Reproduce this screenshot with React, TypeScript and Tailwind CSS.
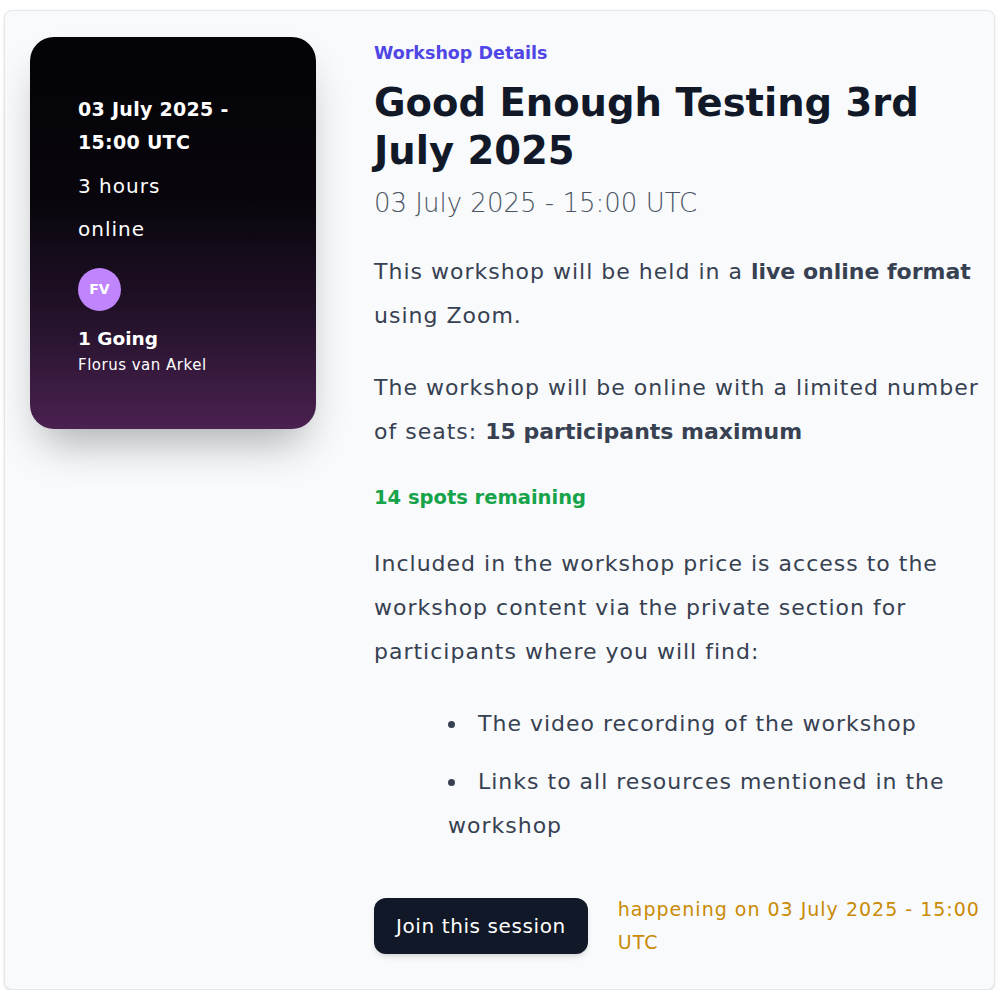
import React from 'react';

const includes = [
  'The video recording of the workshop',
  'Links to all resources mentioned in the workshop',
];

function SessionCard() {
  return (
    <div className="w-[286px] shrink-0 rounded-3xl bg-[linear-gradient(180deg,#040307_0%,#08060c_42%,#24122b_72%,#4a2150_100%)] pt-14 px-12 pb-[52px] text-white shadow-[0_24px_44px_-12px_rgba(0,0,0,0.32)]">
      <p className="text-[19px] font-bold leading-[33px] tracking-[0.3px]">03 July 2025 - 15:00 UTC</p>
      <p className="mt-[6px] text-[20px] leading-[43px] tracking-[1px]">3 hours</p>
      <p className="text-[20px] leading-[43px] tracking-[1px]">online</p>

      <div className="mt-[17px] flex h-[43px] w-[43px] items-center justify-center rounded-full bg-[#c084fc] text-[14px] font-bold">
        FV
      </div>
      <p className="mt-[14px] text-[18.5px] font-bold leading-[28px]">1 Going</p>
      <p className="text-[15px] leading-[24px] tracking-[0.5px]">Florus van Arkel</p>
    </div>
  );
}

export default function App() {
  return (
    <div className="bg-white pt-[10px] pl-[4px] font-['DejaVu_Sans',sans-serif]">
      <div className="flex h-[980px] w-[991px] gap-[58px] rounded-lg border border-gray-200 bg-slate-50 pt-[26px] pl-[25px] pr-[8px] shadow-sm">
        <div>
          <SessionCard />
        </div>

        {/* Details */}
        <div className="flex-1 pt-[2px]">
          <p className="text-[17.5px] font-bold leading-[28px] text-[#4f46e5]">Workshop Details</p>
          <h1 className="mt-3 text-[38.5px] font-bold leading-[48px] text-[#111827]">
            Good Enough Testing 3rd July 2025
          </h1>
          <p className="mt-[10px] text-[26px] font-light leading-[36px] text-[#4b5563]">
            03 July 2025 - 15:00 UTC
          </p>

          <div className="mt-[29px] space-y-7 text-[22px] leading-[44px] tracking-[1px] text-[#374151]">
            <p>
              This workshop will be held in a{' '}
              <strong className="font-bold tracking-normal">live online format</strong> using Zoom.
            </p>
            <p>
              The workshop will be online with a limited number of seats:{' '}
              <strong className="font-bold tracking-normal">15 participants maximum</strong>
            </p>
            <p className="text-[19.5px] font-bold leading-[32px] tracking-normal text-[#16a34a]">14 spots remaining</p>
            <p>
              Included in the workshop price is access to the workshop content via the private section for
              participants where you will find:
            </p>
            <ul className="list-inside list-disc space-y-[14px] pl-[74px]">
              {includes.map((item) => (
                <li key={item}>{item}</li>
              ))}
            </ul>
          </div>

          <div className="mt-[45px] flex items-center gap-[30px]">
            <button className="shrink-0 rounded-xl bg-[#111827] px-[22px] py-[13px] text-[20px] leading-[30px] tracking-[0.6px] text-white shadow-md">
              Join this session
            </button>
            <p className="text-[19px] leading-[33px] tracking-[1px] text-[#ca8a04]">
              happening on 03 July 2025 - 15:00 UTC
            </p>
          </div>
        </div>
      </div>
    </div>
  );
}
